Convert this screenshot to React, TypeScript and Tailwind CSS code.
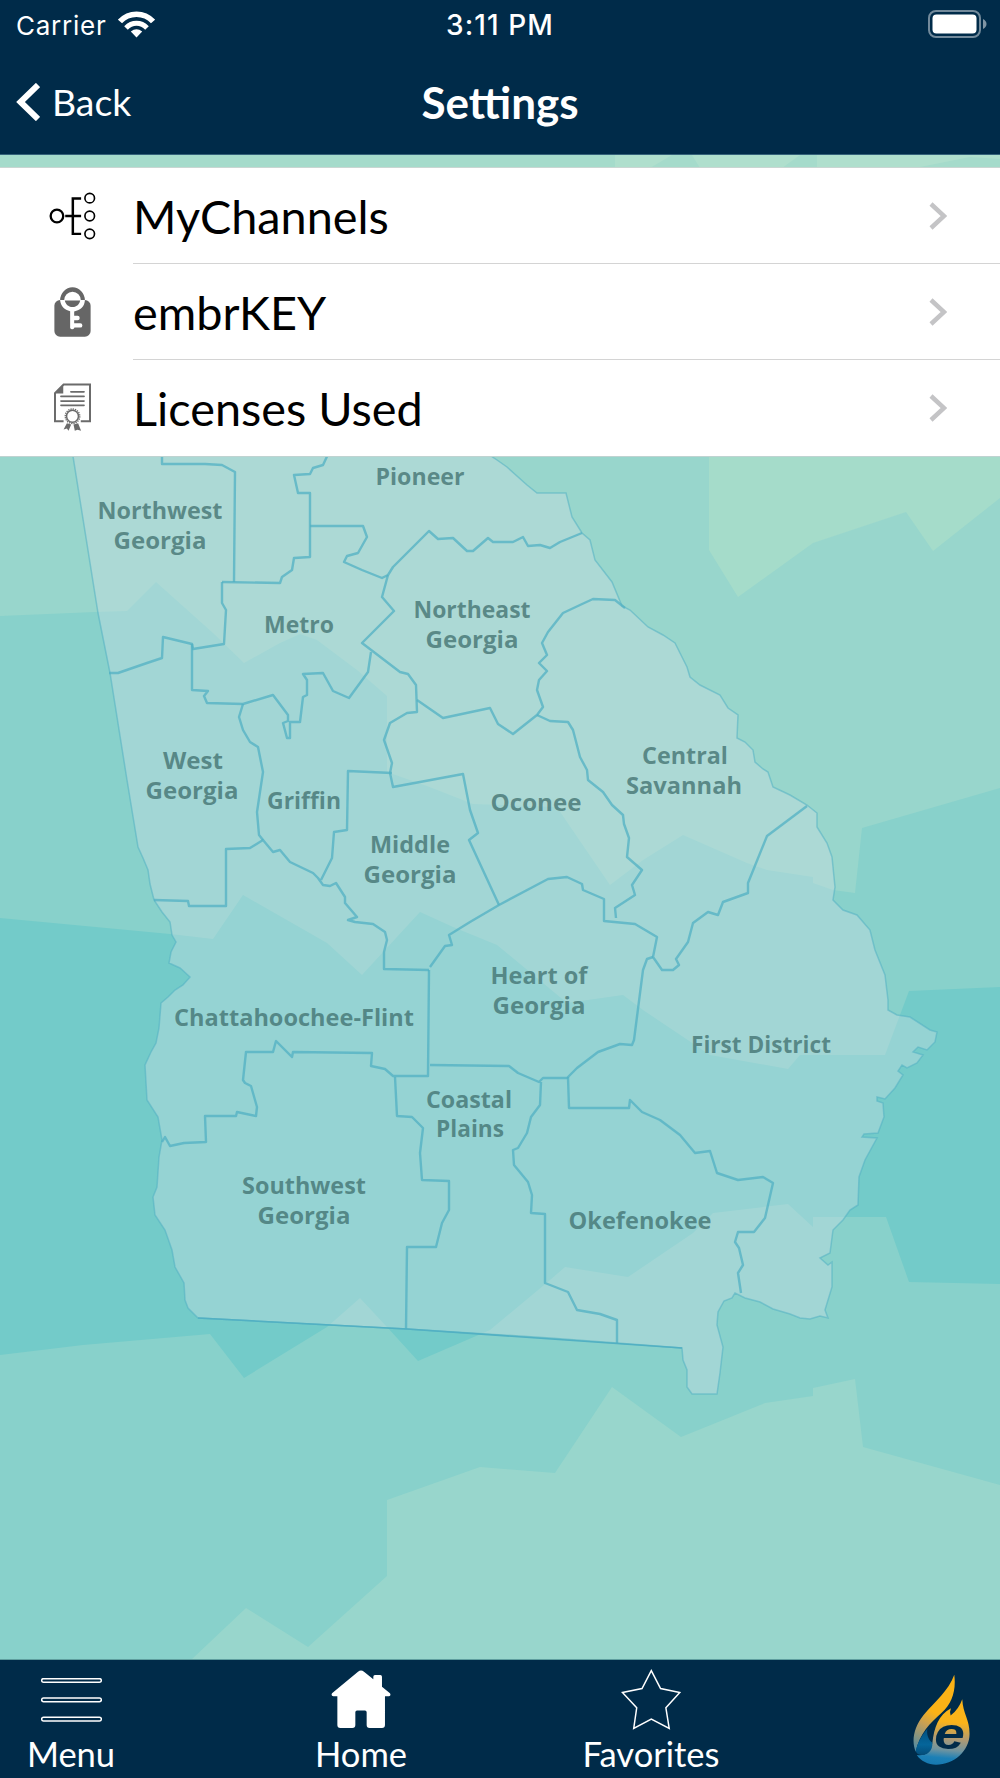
import React from 'react'
import type { ReactNode } from 'react'

type Label = { text: string; x: number; y: number; w: number }

const labels: Label[] = [
  { text: 'Pioneer', x: 420, y: 485, w: 89 },
  { text: 'Northwest', x: 160, y: 519, w: 125 },
  { text: 'Georgia', x: 160, y: 549, w: 93 },
  { text: 'Metro', x: 299, y: 633, w: 70 },
  { text: 'Northeast', x: 472, y: 618, w: 117 },
  { text: 'Georgia', x: 472, y: 648, w: 93 },
  { text: 'West', x: 193, y: 769, w: 60 },
  { text: 'Georgia', x: 192, y: 799, w: 93 },
  { text: 'Griffin', x: 304, y: 809, w: 74 },
  { text: 'Central', x: 685, y: 764, w: 86 },
  { text: 'Savannah', x: 684, y: 794, w: 116 },
  { text: 'Oconee', x: 536, y: 811, w: 91 },
  { text: 'Middle', x: 410, y: 853, w: 80 },
  { text: 'Georgia', x: 410, y: 883, w: 93 },
  { text: 'Heart of', x: 539, y: 984, w: 97 },
  { text: 'Georgia', x: 539, y: 1014, w: 93 },
  { text: 'Chattahoochee-Flint', x: 294, y: 1026, w: 240 },
  { text: 'First District', x: 761, y: 1053, w: 140 },
  { text: 'Coastal', x: 469, y: 1108, w: 86 },
  { text: 'Plains', x: 470, y: 1137, w: 68 },
  { text: 'Southwest', x: 304, y: 1194, w: 124 },
  { text: 'Georgia', x: 304, y: 1224, w: 93 },
  { text: 'Okefenokee', x: 640, y: 1229, w: 143 },
]

const stateOutline =
  '72,450 98,613 110,673 127,780 138,847 143,858 148,870 150,884 154,900 162,912 170,922 172,935 176,942 171,952 169,963 180,968 190,977 183,985 175,990 168,997 161,1003 159,1028 156,1043 151,1052 145,1065 147,1100 158,1117 162,1140 159,1157 157,1187 153,1197 155,1215 165,1230 172,1250 175,1267 184,1283 185,1300 188,1308 198,1318 330,1325 407,1329 550,1338 617,1343 682,1348 683,1360 687,1370 687,1387 692,1394 717,1394 720,1373 723,1347 717,1325 718,1312 724,1301 732,1298 735,1293 745,1298 760,1302 773,1309 790,1314 800,1318 810,1319 820,1316 828,1318 825,1310 832,1287 832,1262 828,1265 820,1258 830,1253 833,1230 843,1220 850,1210 858,1205 859,1177 865,1160 877,1138 862,1137 864,1134 878,1133 884,1117 883,1103 877,1101 877,1097 885,1099 895,1088 903,1075 898,1071 902,1065 907,1068 917,1063 923,1055 913,1052 918,1047 927,1050 935,1042 937,1032 930,1030 910,1017 897,1015 888,1010 888,1000 885,975 875,950 870,930 857,915 843,910 833,900 835,887 832,857 827,843 817,827 817,813 807,805 790,795 773,787 768,772 763,769 755,762 753,750 745,742 737,738 738,715 728,708 720,695 700,685 690,677 687,667 680,653 675,643 663,635 648,627 630,610 622,606 612,582 595,560 590,540 582,533 572,517 566,493 537,493 527,485 507,467 497,460 482,450'

// district borders inside the state
const borders = [
  '162,450 162,464 205,464 222,465 235,472 234,582',
  '222,582 280,583 282,577 292,570 294,558 310,557 310,493 298,493 294,475 310,474 313,468 323,465 330,450',
  '310,526 363,526 367,537 358,553 347,556 344,562 362,570 382,578 388,575',
  '222,582 222,603 226,610 224,644 193,649 192,644 163,637 162,658 147,663 118,673 109,673',
  '192,644 192,690 208,691 204,696 207,703 243,704 273,695 279,703 288,715 288,721 283,723 287,738 290,738 290,722 300,722 303,697 307,695 307,680 303,674 323,673 333,691 349,698 368,672 371,652',
  '388,575 382,597 394,611 362,643 400,672 408,674 416,685 417,712 407,713 390,723 384,740 392,763 390,773 393,787 463,774 470,810 478,833 469,840 499,905',
  '388,575 393,567 429,531 438,539 453,538 467,551 473,551 488,538 493,542 513,542 523,537 528,546 540,545 550,548 560,542 582,533',
  '417,700 443,718 490,708 498,724 513,734 537,715 543,707 537,690 539,680 547,671 539,663 547,655 542,643 548,632 563,613 580,605 593,599 615,600 625,608',
  '537,715 550,721 568,722 573,730 580,757 587,770 588,780 603,792 612,805 623,815 624,824 629,838 627,857 642,870 632,885 635,895 615,908 616,918',
  '430,967 445,946 452,945 449,935 470,922 499,905 548,879 567,877 582,884 583,890 604,899 604,921 635,924 657,937 653,957 662,970 673,970 679,965 676,959 688,942 693,923 708,912 718,915 723,902 748,893 748,883 767,836 807,806',
  '653,957 647,959 643,970 634,1040 632,1045 620,1044 598,1052 577,1068 567,1078 543,1078 539,1082 518,1073 509,1066 430,1065',
  '429,970 428,1076 393,1076 385,1069 371,1066 372,1053 293,1052 292,1057 276,1041 273,1052 246,1052 243,1080 245,1083 251,1086 257,1107 256,1116 237,1112 236,1116 205,1116 206,1142 184,1143 170,1146 165,1137 162,1142',
  '429,970 384,969 384,952 387,940 385,932 373,924 355,922 348,920 357,917 345,903 345,897 336,883 330,886 323,885 318,878 313,873 290,862 280,850 273,852 263,840 250,848 226,849 226,906 189,906 188,901 154,900',
  '243,704 239,717 243,730 250,742 258,747 263,772 257,812 259,835 263,840',
  '392,773 348,771 347,830 334,832 332,858 321,880',
  '395,1077 397,1116 412,1117 423,1128 420,1153 422,1180 449,1181 449,1210 442,1223 436,1247 407,1247 406,1329',
  '541,1082 540,1105 531,1117 527,1133 518,1148 513,1150 514,1165 528,1182 532,1195 531,1213 545,1214 545,1283 568,1292 577,1310 600,1314 617,1320 617,1343',
  '568,1077 569,1108 629,1108 630,1100 642,1112 660,1120 680,1135 695,1153 710,1151 717,1173 738,1180 763,1177 773,1183 765,1218 754,1232 738,1232 735,1242 739,1248 743,1265 738,1273 741,1293',
]

const GeorgiaMap: React.FC = () => (
  <svg viewBox="0 456 1000 1204" className="block h-[1204px] w-[1000px]">
    <rect x="0" y="456" width="1000" height="1204" fill="#98d6cc" />
    <polygon points="709,456 709,550 738,597 813,543 906,512 933,551 1000,498 1000,456" fill="#a5dcca" />
    <polygon
      points="0,616 95,612 127,611 156,582 213,633 244,663 280,643 300,634 317,640 357,670 387,696 387,772 427,786 473,804 557,807 567,822 610,885 643,860 683,835 747,863 767,870 813,877 813,883 833,890 855,893 862,828 1000,788 1000,1660 0,1660"
      fill="#88d1cb"
    />
    <polygon
      points="0,918 170,934 213,939 243,895 327,943 362,975 420,912 453,927 497,945 567,1003 623,995 643,1010 710,1055 788,1069 800,1055 885,1055 909,991 1000,987 1000,1284 909,1282 886,1217 813,1217 813,1227 788,1204 713,1213 693,1233 628,1277 565,1267 550,1280 490,1330 418,1361 387,1327 360,1298 327,1327 244,1378 210,1334 83,1345 0,1355"
      fill="#73cbc9"
    />
    <polygon
      points="191,1660 246,1608 308,1647 387,1576 387,1500 480,1467 555,1473 612,1387 681,1437 765,1403 813,1396 813,1388 855,1379 863,1447 1000,1485 1000,1660"
      fill="#98d6cc"
    />
    <polygon points={stateOutline} fill="#cee0e6" fillOpacity="0.38" />
    <polygon points={stateOutline} fill="none" stroke="#52b0c3" strokeOpacity="0.55" strokeWidth="1.5" />
    <g fill="none" stroke="#52b0c3" strokeOpacity="0.75" strokeWidth="2.4" strokeLinejoin="round">
      {borders.map((points) => (
        <polyline key={points} points={points} />
      ))}
    </g>
    <path d="M198 1318 L407 1329 L682 1348" fill="none" stroke="#52b0c3" strokeWidth="1.6" />
    <g
      fill="#3f6f6e"
      fillOpacity="0.75"
      textAnchor="middle"
      className="font-['Open_Sans','Noto_Sans',sans-serif] text-[24px] font-bold"
    >
      {labels.map((l) => (
        <text key={`${l.text}-${l.x}-${l.y}`} x={l.x} y={l.y} textLength={l.w} lengthAdjust="spacingAndGlyphs">
          {l.text}
        </text>
      ))}
    </g>
    <rect x="0" y="456" width="1000" height="1" fill="#bfd3d1" />
    <rect x="0" y="1659" width="1000" height="1" fill="#5f9f9f" />
  </svg>
)

const ChannelsIcon = () => (
  <svg viewBox="145 78 142 144" className="h-12 w-[47px]" fill="none" stroke="#000">
    <circle cx="169" cy="150" r="19" strokeWidth="7" />
    <path d="M194 150 H242 M242 97 H217 V204 H242" strokeWidth="7.5" />
    <circle cx="268" cy="96" r="14.5" strokeWidth="5" />
    <circle cx="268" cy="150" r="14.5" strokeWidth="5" />
    <circle cx="268" cy="204" r="14.5" strokeWidth="5" />
  </svg>
)

const KeyLockIcon = () => (
  <svg viewBox="163 365 110 149" className="h-[50px] w-[37px]">
    <rect x="164" y="404" width="108" height="109" rx="17" fill="#666" />
    <path d="M181 405 A37 39 0 0 1 255 405 L243 405 A25 26 0 0 0 193 405 Z" fill="#666" />
    <path d="M181 404 H255 C254 424 242 434 223 438 V451 H233 A5 5 0 0 1 233 464 H223 V473 H241 A6 6 0 0 1 241 486 H224 A7 7 0 0 1 211 487 V437 C194 433 183 423 181 404 Z" fill="#fff" />
    <path d="M195 405 H241 C236 431 200 431 195 405 Z" fill="#666" />
  </svg>
)

const CertificateIcon = () => (
  <svg viewBox="161 656 112 147" className="h-[49px] w-[37px]" fill="none" stroke="#6b6b6b">
    <path d="M190 771 H164 V686 L190 660 H270 V771 H242" strokeWidth="6" />
    <path d="M164 687 H189 V661 Z" fill="#6b6b6b" stroke="none" />
    <path d="M212 682 H252 M182 696 H252 M182 710 H252 M182 723 H252" strokeWidth="5" strokeLinecap="round" />
    <circle cx="217" cy="756" r="22" strokeWidth="4" strokeDasharray="4 2.9" />
    <circle cx="217" cy="756" r="18" strokeWidth="4.5" />
    <path d="M200 777 L190 796 L200 793 L205 800 L213 781 Z M234 777 L243 800 L232 797 L224 800 L220 781 Z" fill="#6b6b6b" stroke="none" />
  </svg>
)

const MenuIcon = () => (
  <svg viewBox="123 84 183 132" className="mt-0.5 h-11 w-[61px]" fill="none" stroke="#fff" strokeWidth="4.5">
    <rect x="125" y="86" width="179" height="11" rx="5.5" />
    <rect x="125" y="144" width="179" height="11" rx="5.5" />
    <rect x="125" y="202" width="179" height="11" rx="5.5" />
  </svg>
)

const HomeIcon = () => (
  <svg viewBox="993 59 180 176" className="h-[58.6px] w-[60px]" fill="#fff">
    <path d="M1074 64 Q1083 57 1092 64 L1120 87 V79 Q1120 74 1125 74 H1141 Q1146 74 1146 79 V109 L1170 129 Q1174 136 1167 138 H1155 V224 Q1155 233 1146 233 H1109 Q1100 233 1100 224 V186 Q1100 181 1095 181 H1071 Q1066 181 1066 186 V224 Q1066 233 1057 233 H1021 Q1012 233 1012 224 V138 H1000 Q992 136 996 129 Z" />
  </svg>
)

const StarIcon = () => (
  <svg viewBox="362 57 182 184" className="h-[61px] w-[60.6px]" fill="none" stroke="#fff" strokeWidth="4.5">
    <path d="M453 62 L481 116 L539 128 L497 174 L507 236 L453 208 L400 236 L409 174 L366 128 L425 116 Z" />
  </svg>
)

const FlameLogo = () => (
  <svg viewBox="1239 70 171 274" className="h-[91px] w-[57px]">
    <defs>
      <linearGradient id="flame" gradientUnits="userSpaceOnUse" x1="1335" y1="70" x2="1310" y2="343">
        <stop offset="0" stopColor="#fdb515" />
        <stop offset="0.52" stopColor="#fab31a" />
        <stop offset="0.7" stopColor="#b09a72" />
        <stop offset="0.83" stopColor="#6f94a0" />
        <stop offset="0.92" stopColor="#1c80b6" />
        <stop offset="1" stopColor="#1678b0" />
      </linearGradient>
      <linearGradient id="flameLeft" gradientUnits="userSpaceOnUse" x1="1310" y1="190" x2="1245" y2="300">
        <stop offset="0" stopColor="#fbb216" />
        <stop offset="0.35" stopColor="#c79f55" />
        <stop offset="1" stopColor="#4c8ba8" />
      </linearGradient>
      <linearGradient id="flameDrop" x1="0" y1="0" x2="0" y2="1">
        <stop offset="0" stopColor="#02507f" />
        <stop offset="0.6" stopColor="#05659a" />
        <stop offset="1" stopColor="#044c78" />
      </linearGradient>
    </defs>
    <path d="M1363 72 C1369 120 1356 160 1325 187 C1290 218 1258 250 1247 304 C1234 276 1239 232 1270 194 C1304 154 1346 120 1363 72 Z" fill="url(#flameLeft)" />
    <path d="M1387 146 C1389 190 1409 205 1409 250 C1409 302 1362 343 1308 343 C1284 343 1262 332 1250 314 C1275 318 1293 306 1297 278 C1302 232 1316 192 1353 173 Q1348 184 1352 195 Q1376 177 1387 146 Z" fill="url(#flame)" />
    <path d="M1282 235 C1265 255 1252 277 1247 302 C1250 316 1271 318 1284 308 C1294 301 1298 289 1297 277 C1284 267 1279 252 1282 235 Z" fill="url(#flameDrop)" />
    <text x="1303" y="297" textLength="92" lengthAdjust="spacingAndGlyphs" fill="#002b49" className="font-['Liberation_Sans',sans-serif] text-[136px] font-bold italic">
      e
    </text>
  </svg>
)

const rows: { id: string; icon: ReactNode; label: string }[] = [
  { id: 'channels', icon: <ChannelsIcon />, label: 'MyChannels' },
  { id: 'key', icon: <KeyLockIcon />, label: 'embrKEY' },
  { id: 'licenses', icon: <CertificateIcon />, label: 'Licenses Used' },
]

const tabs: { id: string; icon: ReactNode; label: string }[] = [
  { id: 'menu', icon: <MenuIcon />, label: 'Menu' },
  { id: 'home', icon: <HomeIcon />, label: 'Home' },
  { id: 'favorites', icon: <StarIcon />, label: 'Favorites' },
]

const StatusBar: React.FC = () => (
  <div className="grid h-[50px] grid-cols-3 items-center font-['Inter',sans-serif] text-[26px]">
    <div className="flex items-center gap-[12px] pl-[16px]">
      <span className="tracking-[0.75px]">Carrier</span>
      <svg viewBox="0 0 37 27" className="h-[27px] w-[37px] -translate-y-px" fill="none" stroke="#fff">
        <path d="M2 10.5 C11 0.8 26 0.8 35 10.5" strokeWidth="5.5" />
        <path d="M8 17 C14 10.8 23 10.8 29 17" strokeWidth="5" />
        <path d="M18.5 26.5 L12.8 20.6 Q18.5 16 24.2 20.6 Z" fill="#fff" stroke="none" />
      </svg>
    </div>
    <span className="text-center text-[28px] font-medium tracking-[1.1px]">3:11 PM</span>
    <svg viewBox="0 0 59 28" className="mr-[13px] h-7 w-[59px] -translate-y-px justify-self-end">
      <rect x="1" y="1" width="51" height="26" rx="7" fill="none" stroke="#fff" strokeOpacity="0.45" strokeWidth="2" />
      <rect x="4.5" y="4.5" width="44" height="19" rx="4" fill="#fff" />
      <path d="M55 9 Q58.5 11 58.5 14 Q58.5 17 55 19 Z" fill="#fff" fillOpacity="0.5" />
    </svg>
  </div>
)

const App: React.FC = () => (
  <div className="flex h-[1778px] w-[1000px] flex-col overflow-hidden bg-[#98d6cc] font-['Lato',sans-serif]">
    <header className="h-[155px] shrink-0 border-b border-[#34627a] bg-[#002b49] text-white">
      <StatusBar />
      <div className="grid h-[104px] grid-cols-3 items-center">
        <button className="flex items-center gap-[12px] pl-[16px] text-left text-[37.4px] leading-none">
          <svg viewBox="0 0 24 38" className="h-[38px] w-6" fill="none" stroke="#fff" strokeWidth="6">
            <path d="M22 2 L4.5 19 L22 36" />
          </svg>
          Back
        </button>
        <h1 className="text-center text-[44px] font-bold leading-none">Settings</h1>
      </div>
    </header>

    <svg viewBox="0 0 1000 13" className="block h-[13px] w-[1000px] shrink-0">
      <rect width="1000" height="13" fill="#a5dbcb" />
      <path d="M615 0 H672 L650 13 H615 Z M692 0 H800 L782 13 H700 Z M817 0 H1000 V4 L970 2 L915 13 H817 Z" fill="#afdfcd" />
      <rect y="12" width="1000" height="1" fill="#c9d6d2" />
    </svg>

    <ul className="h-[288px] shrink-0 bg-white">
      {rows.map((row, i) => (
        <li key={row.id} className="flex h-24 items-center">
          <span className="flex w-[133px] shrink-0 justify-center pb-px pl-[11px]">{row.icon}</span>
          <div
            className={
              i < rows.length - 1
                ? 'flex h-full flex-1 items-center justify-between border-b border-[#d4d4d4] pr-[53px]'
                : 'flex h-full flex-1 items-center justify-between pr-[53px]'
            }
          >
            <span className="pt-px text-[46.8px] leading-none text-black">{row.label}</span>
            <svg viewBox="0 0 18 28" className="h-7 w-[18px]" fill="none" stroke="#c4c4c6" strokeWidth="4.5">
              <path d="M2 2 L15 14 L2 26" />
            </svg>
          </div>
        </li>
      ))}
    </ul>

    <main className="h-[1204px] shrink-0">
      <GeorgiaMap />
    </main>

    <nav className="flex h-[118px] shrink-0 justify-between bg-[#002b49] pl-3 text-white">
      {tabs.map((tab) => (
        <button key={tab.id} className="flex w-[118px] flex-col items-center whitespace-nowrap">
          <span className="flex h-[78px] items-center">{tab.icon}</span>
          <span className="-mt-px text-[34.5px] leading-[34px]">{tab.label}</span>
        </button>
      ))}
      <button className="flex w-[118px] justify-center pt-[14px]">
        <FlameLogo />
      </button>
    </nav>
  </div>
)

export default App
